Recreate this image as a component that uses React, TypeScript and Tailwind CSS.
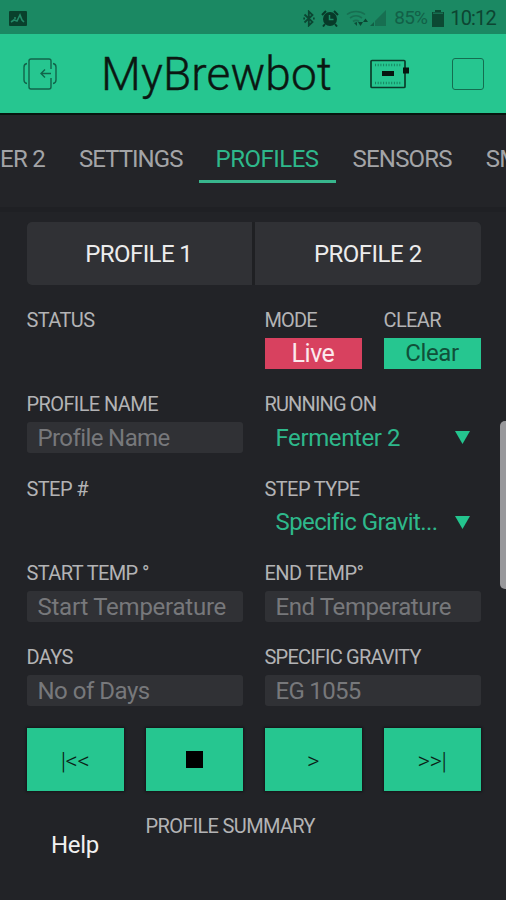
import type { ReactNode } from "react";

const TABS = [
  { name: "SETTINGS", box: "ml-[34px] tracking-[-0.95px]", active: false },
  { name: "PROFILES", box: "ml-[17px] pl-4 pr-[17px] tracking-[-0.5px]", active: true },
  { name: "SENSORS", box: "ml-[17px] tracking-[-0.8px]", active: false },
  { name: "SM", box: "ml-[34px] tracking-[-0.85px]", active: false },
];

function Label({ children, className = "tracking-[-0.6px]" }: { children: ReactNode; className?: string }) {
  return <div className={`h-[25px] whitespace-nowrap text-[20px] leading-[25px] text-[#b3b3b5] ${className}`}>{children}</div>;
}

function Input({ placeholder, className }: { placeholder: string; className: string }) {
  return (
    <input
      placeholder={placeholder}
      className={`mt-[5px] block h-[31px] w-full rounded-[3px] bg-[#303135] pl-[11px] pt-[1px] text-[24px] leading-[30px] outline-none placeholder:text-[#77787b] ${className}`}
    />
  );
}

function Select({ value, className }: { value: string; className: string }) {
  return (
    <div className="mt-[5px] flex h-[31px] items-center justify-between pl-[11px] pr-[11px] text-[24px] leading-[31px] text-[#2eb88b]">
      <span className={`pt-[1px] ${className}`}>{value}</span>
      <svg width="15" height="13" viewBox="0 0 15 13" fill="#24c48e">
        <path d="M0 0H15L7.5 13Z" />
      </svg>
    </div>
  );
}

function Key({ children }: { children: ReactNode }) {
  return (
    <button className="flex h-[63px] items-center justify-center bg-[#26c690] pt-[2px] text-[24px] font-light tracking-[-0.4px] text-[#0b1f17] shadow-[0_0_2px_1px_#15161a]">
      {children}
    </button>
  );
}

function StatusBar() {
  return (
    <div className="flex h-[34px] items-center bg-[#1b8963] pl-[9px] pr-[10px] pt-[2px] text-[#0d4532]">
      <svg width="18" height="15" viewBox="0 0 18 15">
        <rect width="18" height="15" rx="1" fill="#09402c" />
        <path d="M2 11L5 9L8 10L11 4L13 9L15 11" fill="none" stroke="#238a68" strokeWidth="1.6" />
        <circle cx="6" cy="7" r="1" fill="#238a68" />
      </svg>
      <div className="ml-auto flex items-center">
        <svg width="12" height="17" viewBox="0 0 12 17" fill="none" stroke="#0b4632" strokeWidth="1.8">
          <path d="M1.5 4.5L9.5 12L5.8 15.5V1.5L9.5 5L1.5 12.5" />
          <path d="M.3 8.5H2M10 8.5H11.7" />
        </svg>
        <svg className="ml-[6px]" width="18" height="17" viewBox="0 0 18 17">
          <circle cx="9" cy="9" r="7" fill="#073b29" />
          <path d="M1 5L5 1M17 5L13 1M4 14L2 16.5M14 14L16 16.5" stroke="#073b29" strokeWidth="2" />
          <path d="M8.5 5V9.5H12.5" fill="none" stroke="#1b8963" strokeWidth="1.5" />
        </svg>
        <svg className="ml-[7px]" width="23" height="17" viewBox="0 0 23 17" fill="none">
          <path d="M1 4.5C6 .5 14 .5 19 4.5M4 8C8 5 12 5 16 8M7 11.5C9 10 11 10 13 11.5" stroke="#176f51" strokeWidth="1.6" />
          <path d="M8 13L11 12V16Z" fill="#0b4d37" />
          <path d="M12 12H17L14.5 16ZM17 12L19.5 8.5L22 12Z" fill="#0b4632" />
        </svg>
        <svg className="ml-[1px]" width="17" height="17" viewBox="0 0 17 17">
          <path d="M5 11L16 0V16H5Z" fill="#176f51" />
          <path d="M0 16L4 12V16Z" fill="#125f45" />
        </svg>
        <span className="ml-[7px] text-[19px] leading-[20px] tracking-[-0.8px] text-[#126047]">85%</span>
        <svg className="ml-[5px]" width="12" height="17" viewBox="0 0 12 17" fill="#0c4933">
          <path d="M3 0H9V2H12V17H0V2H3Z" />
          <path d="M1 4V2.5H11V4Z" fill="#176f51" />
        </svg>
        <span className="ml-[6px] text-[20px] leading-[20px] tracking-[-0.8px]">10:12</span>
      </div>
    </div>
  );
}

function Header() {
  return (
    <header className="flex h-[79px] items-center bg-[#26c690] pl-[22px] pr-[22px]">
      <svg width="36" height="34" viewBox="0 0 36 34" fill="none" stroke="#12644a" strokeWidth="1.4">
        <path d="M29 12V4Q29 2 27 2H9Q7 2 7 4V30Q7 32 9 32H27Q29 32 29 30V21" />
        <path d="M5 6.5Q2 7 2 10V23Q2 26 5 26.5M31 6.5Q34 7 34 10V23Q34 26 31 26.5" />
        <path d="M29 16.5H19M23 12.5L19 16.5L23 20.5" />
      </svg>
      <h1 className="ml-[43px] w-[230px] whitespace-nowrap pt-[2px] text-[46px] font-light leading-[77px] tracking-[0.15px] text-[#0b1712] [-webkit-text-stroke:0.4px_#0b1712]">MyBrewbot</h1>
      <svg className="ml-[37px]" width="42" height="32" viewBox="0 0 42 32" fill="none">
        <rect x="3" y="2.5" width="34" height="27" rx="1" stroke="#0b3c2b" strokeWidth="1.7" />
        <path d="M7 7H33M7 25H33" stroke="#178460" strokeWidth="2.5" strokeDasharray="1 1.7" />
        <path d="M14 13H26V18H14ZM35 9.500H41V15.500H35Z" fill="#07150f" />
      </svg>
      <div className="ml-auto h-[32px] w-[32px] rounded-[3px] border-[1.5px] border-[#146d50]" />
    </header>
  );
}

export default function App() {
  return (
    <div className="relative flex h-[900px] w-[506px] flex-col overflow-hidden bg-[#222327] font-['Roboto','Liberation_Sans',sans-serif]">
      <StatusBar />
      <Header />
      <nav className="flex h-[94px] shrink-0 items-start overflow-hidden whitespace-nowrap border-t-2 border-[#07150f] bg-[#232428] pt-[27px] text-[24px] leading-[34px] text-[#a3a4a7]">
        <span className="tracking-[-0.75px]">ER 2</span>
        {TABS.map((tab) => (
          <span
            key={tab.name}
            className={`${tab.box} ${tab.active ? "h-[41px] border-b-[3px] border-[#38b68d] text-[#2eb88b]" : ""}`}
          >
            {tab.name}
          </span>
        ))}
      </nav>
      <main className="border-t-[5px] border-[#1f2024] pl-[26.500px] pr-[25.500px] pt-[10px]">
        <div className="grid h-[63px] grid-cols-2 gap-[3px] overflow-hidden rounded-[5px] bg-[#1f2023] text-[24px] text-[#ececec]">
          <button className="bg-[#303135] pr-[1px] tracking-[-0.6px]">PROFILE 1</button>
          <button className="bg-[#303135] tracking-[-0.5px]">PROFILE 2</button>
        </div>
        <div className="mt-[23px] grid grid-cols-4 auto-rows-[61px] gap-x-[22px] gap-y-[23.300px]">
          <div className="col-span-2">
            <Label>STATUS</Label>
          </div>
          <div>
            <Label className="tracking-[-0.9px]">MODE</Label>
            <button className="mt-[5px] block h-[31px] w-full bg-[#d8415f] text-[25px] leading-[31px] tracking-[-0.5px] text-[#fbe9ed]">Live</button>
          </div>
          <div>
            <Label>CLEAR</Label>
            <button className="mt-[5px] block h-[31px] w-full bg-[#26c690] text-[24px] leading-[31px] tracking-[-0.4px] text-[#105039]">Clear</button>
          </div>
          <div className="col-span-2">
            <Label>PROFILE NAME</Label>
            <Input placeholder="Profile Name" className="tracking-[-0.6px]" />
          </div>
          <div className="col-span-2">
            <Label className="tracking-[-0.85px]">RUNNING ON</Label>
            <Select value="Fermenter 2" className="tracking-[-0.4px]" />
          </div>
          <div className="col-span-2">
            <Label>STEP #</Label>
          </div>
          <div className="col-span-2">
            <Label>STEP TYPE</Label>
            <Select value="Specific Gravit..." className="tracking-[-0.6px]" />
          </div>
          <div className="col-span-2">
            <Label>START TEMP °</Label>
            <Input placeholder="Start Temperature" className="tracking-[-0.25px]" />
          </div>
          <div className="col-span-2">
            <Label>END TEMP°</Label>
            <Input placeholder="End Temperature" className="tracking-[-0.4px]" />
          </div>
          <div className="col-span-2">
            <Label>DAYS</Label>
            <Input placeholder="No of Days" className="tracking-[-0.5px]" />
          </div>
          <div className="col-span-2">
            <Label className="tracking-[-0.8px]">SPECIFIC GRAVITY</Label>
            <Input placeholder="EG 1055" className="tracking-[-0.7px]" />
          </div>
        </div>
        <div className="mt-[22px] grid grid-cols-4 gap-x-[22px]">
          <Key>|&lt;&lt;</Key>
          <Key>
            <span className="mt-[-2px] size-[17px] bg-black" />
          </Key>
          <Key>&gt;</Key>
          <Key>&gt;&gt;|</Key>
        </div>
        <div className="mt-[23px] grid grid-cols-4 gap-x-[22px]">
          <button className="mt-[16px] h-[30px] text-[24px] leading-[30px] tracking-[-0.3px] text-[#f0f0f0]">Help</button>
          <Label className="tracking-[-0.65px]">PROFILE SUMMARY</Label>
        </div>
      </main>
      <div className="absolute left-[500px] top-[421px] h-[168px] w-[12px] rounded-[5px] bg-[#98989b]" />
    </div>
  );
}
